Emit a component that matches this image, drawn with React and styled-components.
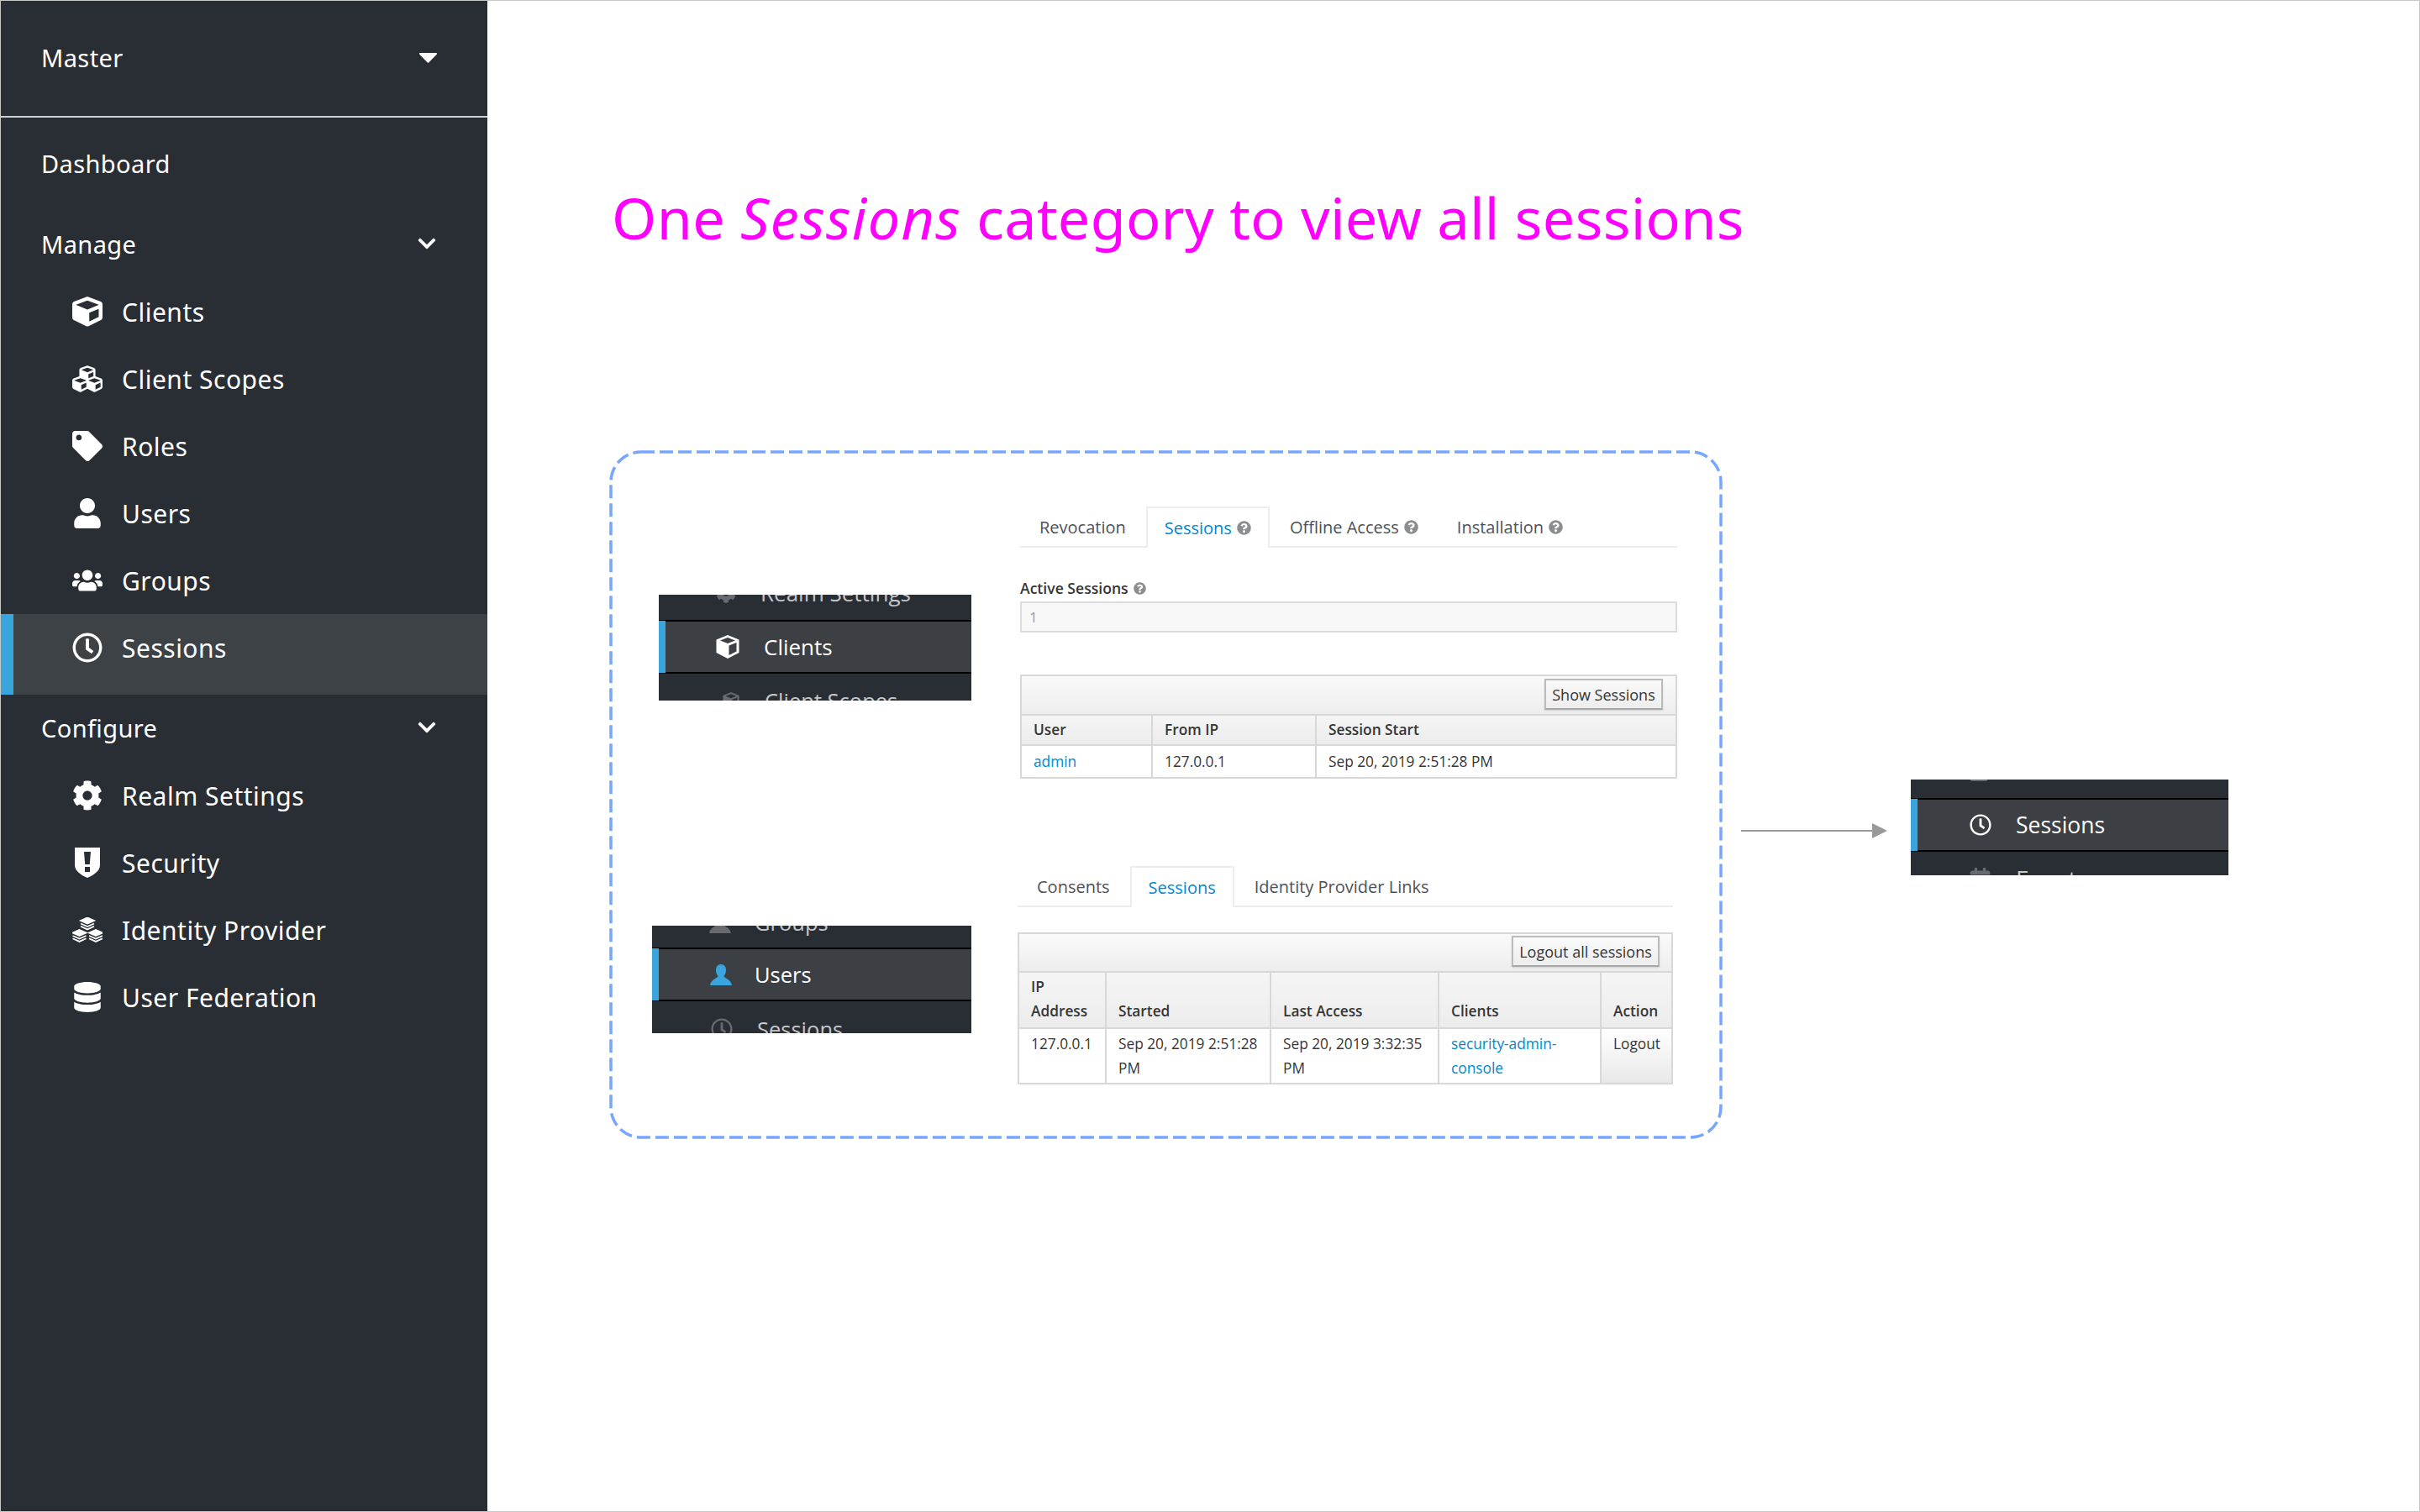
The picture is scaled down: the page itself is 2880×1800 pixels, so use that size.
import React from "react";
import styled, { createGlobalStyle } from "styled-components";
import {
  FaCube, FaCubes, FaTag, FaUser, FaUsers, FaRegClock, FaCog, FaDatabase,
  FaChevronDown, FaQuestionCircle, FaCalendar,
} from "react-icons/fa";

const Global = createGlobalStyle`
  html, body { margin: 0; padding: 0; background: #fff; }
  * { box-sizing: border-box; }
`;

const Page = styled.div`
  width: 2880px; height: 1800px; border: 1px solid #c8c8c8; display: flex; background: #fff; overflow: hidden;
`;
const Sidebar = styled.nav`
  width: 579px; flex: none; background: #292e34; color: #fff;
  font-family: "Noto Sans", sans-serif; font-size: 30px; letter-spacing: 0.5px;
`;
const RealmHeader = styled.div`
  height: 139px; border-bottom: 2px solid #d0d0d0; display: flex; align-items: center; justify-content: space-between;
  padding: 0 60px 2px 48px; font-size: 29px; letter-spacing: 0.4px;
`;
const NavList = styled.div` padding-top: 15px; `;
const GroupRow = styled.div`
  height: 80px; margin-top: ${(p) => (p.$flush ? 0 : 16)}px; display: flex; align-items: center; justify-content: space-between;
  padding: 0 60px 2px 48px; font-size: 29px; letter-spacing: 0.4px;
`;
const ItemRow = styled.div`
  height: ${(p) => (p.$active ? 96 : 80)}px; display: flex; align-items: center; gap: 23px;
  padding: ${(p) => (p.$active ? "0 0 16px 70px" : "0 0 0 85px")};
  background: ${(p) => (p.$active ? "#3d4247" : "transparent")};
  border-left: ${(p) => (p.$active ? "15px solid #39a5dc" : "0")};
`;
const IconSlot = styled.span`
  width: 36px; height: 36px; flex: none; display: flex; align-items: center; justify-content: center;
`;
const Main = styled.main` flex: 1; padding-top: 208px; min-width: 0; `;
const Title = styled.h1`
  margin: 0 0 0 148px; height: 100px; line-height: 100px; color: #ff00ff;
  font-family: "Noto Sans", sans-serif; font-weight: 400; font-size: 68.300px; letter-spacing: 0.3px; white-space: nowrap;
  em { font-style: italic; letter-spacing: 1.300px; }
`;
const Diagram = styled.div` display: flex; align-items: flex-start; margin: 227px 0 0 145px; `;
const DashBox = styled.div`
  position: relative; width: 1325px; height: 820px; padding-top: 67px; flex: none;
`;
const DashOutline = styled.svg` position: absolute; inset: 0; `;
const Section = styled.div`
  position: relative; display: flex; align-items: flex-start;
  margin: ${(p) => p.$top}px 0 0 ${(p) => p.$left}px; gap: ${(p) => p.$gap}px;
`;
const Arrow = styled.svg` flex: none; margin: 443px 0 0 22px; `;

const Thumb = styled.div`
  position: relative; flex: none; width: ${(p) => p.$w}px; margin-top: ${(p) => p.$mt}px; margin-left: ${(p) => p.$ml || 0}px;
  background: #292e34; font-family: "Open Sans", sans-serif; color: #fff; overflow: hidden;
`;
const Clip = styled.div`
  height: ${(p) => p.$h}px; overflow: hidden; display: flex; flex-direction: column;
  justify-content: ${(p) => (p.$end ? "flex-end" : "flex-start")};
`;
const ThumbContent = styled.div`
  flex: none; height: 60px; display: flex; align-items: center;
  padding-left: ${(p) => p.$pad}px; gap: ${(p) => p.$gap}px;
  margin-top: ${(p) => p.$mt || 0}px; margin-bottom: ${(p) => p.$mb || 0}px;
  font-size: ${(p) => p.$fs}px; color: ${(p) => (p.$dim ? "#c6c7c9" : "#fff")};
  svg { color: ${(p) => (p.$dim ? "#676b70" : "#fff")}; flex: none; }
`;
const ThumbActive = styled.div`
  height: 64px; border-top: 2px solid #030303; border-bottom: 2px solid #030303; background: #3c4044; position: relative;
  &::before { content: ""; position: absolute; left: 0; top: -1px; bottom: -1px; width: 8px; background: #39a5dc; }
`;

const Panel = styled.div`
  flex: none; width: ${(p) => p.$w}px; font-family: "Open Sans", sans-serif; color: #363636; font-size: 17.3px;
  a { color: #0088ce; text-decoration: none; }
`;
const Tabs = styled.div`
  height: 49px; display: flex; border-bottom: 2px solid #ededed; padding-left: ${(p) => p.$pl}px; gap: 2px;
`;
const Tab = styled.div`
  height: 49px; display: flex; align-items: center; gap: 6px; padding: 0 ${(p) => (p.$active ? 20 : 22)}px;
  font-size: 20px; color: ${(p) => (p.$active ? "#0088ce" : "#4d5258")};
  background: ${(p) => (p.$active ? "#fff" : "transparent")};
  border: ${(p) => (p.$active ? "2px solid #ededed" : "0")}; border-bottom: 0; white-space: nowrap;
`;
const Help = styled(FaQuestionCircle)` color: #8b8d8f; flex: none; `;
const FieldLabel = styled.div`
  margin-top: 37px; height: 22px; display: flex; align-items: center; gap: 6px; font-size: 17.6px; font-weight: 600;
`;
const ReadOnly = styled.div`
  margin-top: 5px; height: 37px; background: #f8f8f8; border: 2px solid #dcdcdc; color: #9c9c9c;
  padding: 0 9px; display: flex; align-items: center; font-size: 17px;
`;
const Toolbar = styled.div`
  height: ${(p) => p.$h}px; display: flex; justify-content: flex-end; padding: ${(p) => p.$pt}px ${(p) => p.$pr}px 0 0;
  background: linear-gradient(#fafafa, #ededed); border: 2px solid #d8d8d8; border-bottom: 0; margin-top: ${(p) => p.$mt}px;
`;
const ToolButton = styled.div`
  height: 37px; width: ${(p) => p.$w}px; display: flex; align-items: center; justify-content: center; font-size: 18px;
  background: linear-gradient(#fafafa, #ededed); border: 2px solid #bbb; border-bottom-color: #a8a8a8;
  box-shadow: 0 1px 2px rgba(0,0,0,.12); white-space: nowrap;
`;
const Table = styled.table`
  width: 100%; border-collapse: collapse; table-layout: fixed;
`;
const Th = styled.th`
  width: ${(p) => (p.$w ? p.$w + "px" : "auto")}; height: ${(p) => p.$h}px; padding: 0 0 ${(p) => p.$pb || 0}px 14px;
  text-align: left; font-weight: 600; vertical-align: bottom; line-height: 29px; font-size: 17.3px;
  background: linear-gradient(#f5f5f5, #ececec); border: 2px solid #d8d8d8;
`;
const Td = styled.td`
  height: ${(p) => p.$h}px; padding: ${(p) => p.$pt || 0}px 6px 0 14px; vertical-align: top; line-height: 29px;
  background: ${(p) => (p.$shade ? "linear-gradient(#fff, #e8e8e8)" : "#fff")};
  border: 2px solid #d8d8d8;
`;

const White = "#fff";
const Shield = () => (
  <svg width="30" height="36" viewBox="0 0 30 36"><path fill={White} fillRule="evenodd" d="M0 0H30V21C30 28 22 33 15 36C8 33 0 28 0 21ZM11 5L12.2 20H17.8L19 5ZM12 23V29H18V23Z" /></svg>
);
const Stack = ({ x, y }) => (
  <g transform={`translate(${x} ${y})`} fill="none" stroke={White} strokeWidth="1.8">
    <path d="M0.5 4L8.5 0.5L16.5 4L8.5 7.5Z" fill={White} />
    <path d="M0.5 7.5L8.5 11L16.5 7.5" />
    <path d="M0.5 10.8L8.5 14.4L16.5 10.8" />
  </g>
);
const Bundle = () => (
  <svg width="36" height="30" viewBox="0 0 36 30"><Stack x={9.5} y={0} /><Stack x={0} y={14.5} /><Stack x={19.5} y={14.5} /></svg>
);
const Bust = ({ color }) => (
  <svg width="26" height="25" viewBox="0 0 26 25"><path fill={color} d="M13 0C17 0 19 3 19 7C19 10 18 12 16.500 14C17 16.500 25 18 26 25H0C1 18 9 16.500 9.500 14C8 12 7 10 7 7C7 3 9 0 13 0Z" /></svg>
);
const Caret = () => (
  <svg width="21" height="12" viewBox="0 0 21 12"><path fill={White} d="M1 0H20C20.900 0 21.300 1 20.700 1.700L11.200 11.500C10.800 11.900 10.200 11.900 9.800 11.500L.3 1.700C-.3 1 .1 0 1 0Z" /></svg>
);
const OutlineCube = ({ size }) => (
  <svg width={size} height={size} viewBox="0 0 28 28"><path fill="currentColor" fillRule="evenodd" d="M14 0L27.500 5.500V21L14 28L.5 21V5.500ZM14 3L5 6.500L14 10L23 6.500ZM15.500 12.500V24L24.500 19.500V9Z" /></svg>
);

const manage = [
  [<FaCube size={36} />, "Clients"],
  [<FaCubes size={36} />, "Client Scopes"],
  [<FaTag size={36} />, "Roles"],
  [<FaUser size={36} />, "Users"],
  [<FaUsers size={36} />, "Groups"],
];
const configure = [
  [<FaCog size={36} />, "Realm Settings"],
  [<Shield />, "Security"],
  [<Bundle />, "Identity Provider"],
  [<FaDatabase size={36} />, "User Federation"],
];

export default function App() {
  return (
    <Page>
      <Global />
      <Sidebar>
        <RealmHeader>Master<Caret /></RealmHeader>
        <NavList>
          <GroupRow $flush>Dashboard</GroupRow>
          <GroupRow>Manage<FaChevronDown size={24} /></GroupRow>
          {manage.map(([icon, label]) => (
            <ItemRow key={label}><IconSlot>{icon}</IconSlot>{label}</ItemRow>
          ))}
          <ItemRow $active><IconSlot><FaRegClock size={36} /></IconSlot>Sessions</ItemRow>
          <GroupRow $flush>Configure<FaChevronDown size={24} /></GroupRow>
          {configure.map(([icon, label]) => (
            <ItemRow key={label}><IconSlot>{icon}</IconSlot>{label}</ItemRow>
          ))}
        </NavList>
      </Sidebar>
      <Main>
        <Title>One <em>Sessions</em> category to view all sessions</Title>
        <Diagram>
          <DashBox>
            <DashOutline width="1325" height="820" viewBox="0 0 1325 820">
              <rect x="2" y="2" width="1321" height="816" rx="36" fill="none" stroke="#78a6ff" strokeWidth="3.500" strokeDasharray="16 6" />
            </DashOutline>
            <Section $top={0} $left={59} $gap={58}>
              <Thumb $w={372} $mt={105}>
                <Clip $h={30} $end><ThumbContent $pad={68} $gap={29} $fs={26} $mb={2} $dim><FaCog size={24} />Realm Settings</ThumbContent></Clip>
                <ThumbActive><ThumbContent $pad={68} $gap={29} $fs={26}><OutlineCube size={28} />Clients</ThumbContent></ThumbActive>
                <Clip $h={32}><ThumbContent $pad={76} $gap={30} $fs={25.500} $mt={2} $dim><OutlineCube size={20} />Client Scopes</ThumbContent></Clip>
              </Thumb>
              <Panel $w={782}>
                <Tabs $pl={1}>
                  <Tab>Revocation</Tab>
                  <Tab $active>Sessions<Help size={17} /></Tab>
                  <Tab>Offline Access<Help size={17} /></Tab>
                  <Tab>Installation<Help size={17} /></Tab>
                </Tabs>
                <FieldLabel>Active Sessions<Help size={15} /></FieldLabel>
                <ReadOnly>1</ReadOnly>
                <Toolbar $h={47} $pt={3} $pr={15} $mt={50}><ToolButton $w={141}>Show Sessions</ToolButton></Toolbar>
                <Table>
                  <thead><tr><Th $w={156} $h={36} $pb={3}>User</Th><Th $w={195} $h={36} $pb={3}>From IP</Th><Th $h={36} $pb={3}>Session Start</Th></tr></thead>
                  <tbody><tr><Td $h={39} $pt={4}><a>admin</a></Td><Td $h={39} $pt={4}>127.0.0.1</Td><Td $h={39} $pt={4}>Sep 20, 2019 2:51:28 PM</Td></tr></tbody>
                </Table>
              </Panel>
            </Section>
            <Section $top={104} $left={51} $gap={55}>
              <Thumb $w={380} $mt={71}>
                <Clip $h={26} $end><ThumbContent $pad={68} $gap={28} $fs={25.500} $dim><Bust color="#676b70" />Groups</ThumbContent></Clip>
                <ThumbActive><ThumbContent $pad={69} $gap={27} $fs={25.500}><Bust color="#39a5dc" />Users</ThumbContent></ThumbActive>
                <Clip $h={38}><ThumbContent $pad={70} $gap={29} $fs={25.500} $mt={3} $dim><FaRegClock size={26} />Sessions</ThumbContent></Clip>
              </Thumb>
              <Panel $w={780}>
                <Tabs $pl={1}>
                  <Tab>Consents</Tab>
                  <Tab $active>Sessions</Tab>
                  <Tab>Identity Provider Links</Tab>
                </Tabs>
                <Toolbar $h={46} $pt={2} $pr={14} $mt={30}><ToolButton $w={176}>Logout all sessions</ToolButton></Toolbar>
                <Table>
                  <thead><tr>
                    <Th $w={104} $h={67} $pb={5}>IP<br />Address</Th>
                    <Th $w={196} $h={67} $pb={5}>Started</Th>
                    <Th $w={200} $h={67} $pb={5}>Last Access</Th>
                    <Th $w={193} $h={67} $pb={5}>Clients</Th>
                    <Th $h={67} $pb={5}>Action</Th>
                  </tr></thead>
                  <tbody><tr>
                    <Td $h={66} $pt={3}>127.0.0.1</Td>
                    <Td $h={66} $pt={3}>Sep 20, 2019 2:51:28 PM</Td>
                    <Td $h={66} $pt={3}>Sep 20, 2019 3:32:35 PM</Td>
                    <Td $h={66} $pt={3}><a>security-admin-<br />console</a></Td>
                    <Td $h={66} $pt={3} $shade>Logout</Td>
                  </tr></tbody>
                </Table>
              </Panel>
            </Section>
          </DashBox>
          <Arrow width="174" height="20" viewBox="0 0 174 20">
            <path d="M0 10H157" stroke="#999" strokeWidth="2" />
            <path d="M156 1L174 10L156 19Z" fill="#999" />
          </Arrow>
          <Thumb $w={378} $mt={392} $ml={28}>
            <Clip $h={22} $end><ThumbContent $pad={69} $gap={33} $fs={26.500} $mb={2} $dim><FaUser size={24} />Users</ThumbContent></Clip>
            <ThumbActive><ThumbContent $pad={70} $gap={29} $fs={26.500}><FaRegClock size={26} />Sessions</ThumbContent></ThumbActive>
            <Clip $h={28}><ThumbContent $pad={69} $gap={29} $fs={28} $mt={2} $dim><FaCalendar size={27} />Events</ThumbContent></Clip>
          </Thumb>
        </Diagram>
      </Main>
    </Page>
  );
}
